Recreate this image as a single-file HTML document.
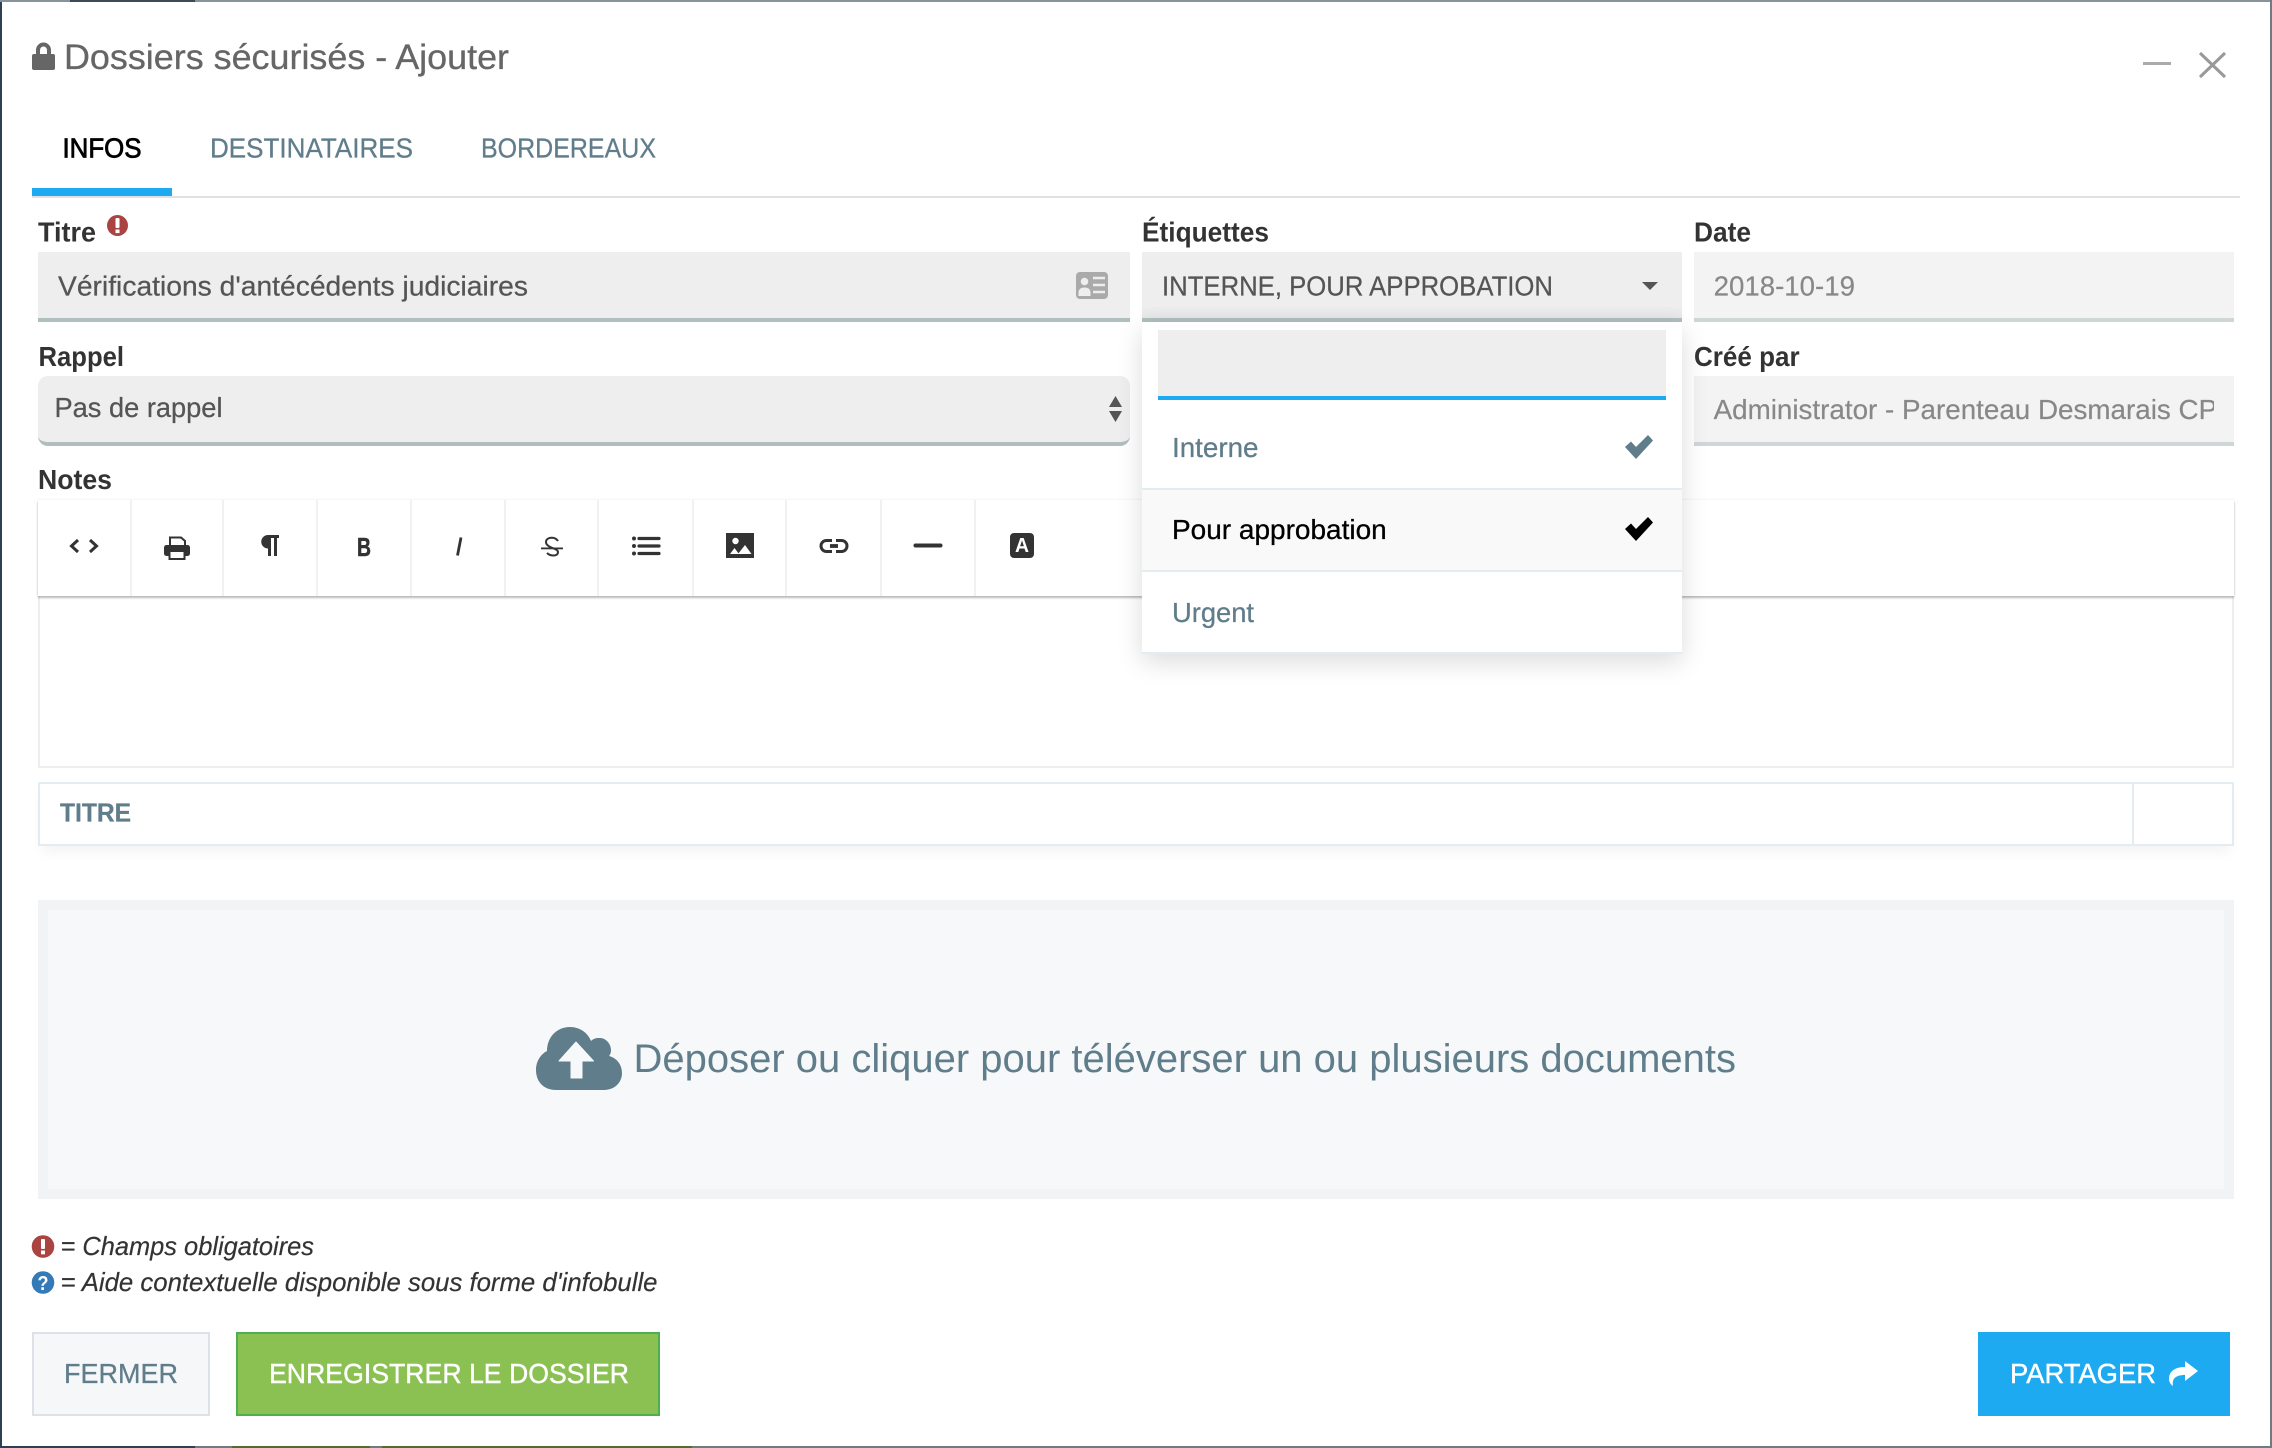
<!DOCTYPE html>
<html lang="fr">
<head>
<meta charset="utf-8">
<title>Dossiers sécurisés - Ajouter</title>
<style>
html,body{margin:0;padding:0;width:2272px;height:1448px;overflow:hidden;background:#2f4050;font-family:"Liberation Sans",sans-serif}
.b{position:absolute;box-sizing:border-box}
svg{position:absolute;left:0;top:0}
text{font-family:"Liberation Sans",sans-serif}
.m{font-weight:bold;fill:#333;font-size:28px}
.s{fill:#607d8b;stroke:#607d8b;stroke-width:.3px}
.w{fill:#fff;stroke:#fff;stroke-width:.4px}
.g{fill:#555;stroke:#555;stroke-width:.25px}
.l{fill:#888;stroke:#888;stroke-width:.2px}
.it{fill:#333;stroke:#333;stroke-width:.2px;font-style:italic}
.sep{top:500px;width:2px;height:96px;background:#f1f1f1}
</style>
</head>
<body>
<!-- backdrop strips -->
<div class="b" style="left:0;top:0;width:2272px;height:2px;background:#87939a"></div>
<div class="b" style="left:70px;top:0;width:125px;height:2px;background:#3b4a56"></div>
<div class="b" style="left:2270px;top:0;width:2px;height:1448px;background:#6f7b7e"></div>
<div class="b" style="left:0;top:1446px;width:2272px;height:2px;background:#6f7b7e"></div>
<div class="b" style="left:0;top:1446px;width:195px;height:2px;background:#2f4050"></div>
<div class="b" style="left:232px;top:1446px;width:138px;height:2px;background:#56692f"></div>
<div class="b" style="left:382px;top:1446px;width:310px;height:2px;background:#56692f"></div>

<!-- window -->
<div class="b" style="left:2px;top:2px;width:2268px;height:1444px;background:#fff"></div>

<!-- tabs -->
<div class="b" style="left:32px;top:196px;width:2208px;height:2px;background:#e0e0e0"></div>
<div class="b" style="left:32px;top:188px;width:140px;height:8px;background:#1eaaf1"></div>

<!-- row 1 -->
<div class="b" style="left:38px;top:252px;width:1092px;height:70px;background:#eee;border-bottom:4px solid #b0bec0"></div>
<div class="b" style="left:1142px;top:252px;width:540px;height:70px;background:linear-gradient(#eee 0,#eee 82%,#e6e6e6 100%);border-bottom:4px solid #b0bec0"></div>
<div class="b" style="left:1694px;top:252px;width:540px;height:70px;background:#f3f3f3;border-bottom:4px solid #cfd6d8"></div>

<!-- row 2 -->
<div class="b" style="left:38px;top:376px;width:1092px;height:70px;background:#eee;border-bottom:4px solid #b0bec0;border-radius:10px"></div>
<div class="b" style="left:1694px;top:376px;width:540px;height:70px;background:#f3f3f3;border-bottom:4px solid #cfd6d8"></div>

<!-- editor -->
<div class="b" style="left:38px;top:596px;width:2196px;height:172px;background:#fff;border:2px solid #eee;border-top:0"></div>
<div class="b" style="left:38px;top:500px;width:2196px;height:96px;background:#fff;box-shadow:0 2px 2px rgba(0,0,0,.25),0 0 3px rgba(0,0,0,.08)"></div>
<div class="b sep" style="left:130px"></div>
<div class="b sep" style="left:222px"></div>
<div class="b sep" style="left:316px"></div>
<div class="b sep" style="left:410px"></div>
<div class="b sep" style="left:504px"></div>
<div class="b sep" style="left:597px"></div>
<div class="b sep" style="left:692px"></div>
<div class="b sep" style="left:785px"></div>
<div class="b sep" style="left:880px"></div>
<div class="b sep" style="left:974px"></div>

<!-- title table -->
<div class="b" style="left:38px;top:782px;width:2196px;height:64px;background:#fff;border:2px solid #e3ecf0;box-shadow:0 10px 12px -4px rgba(0,0,0,.05)"></div>
<div class="b" style="left:2132px;top:782px;width:2px;height:64px;background:#e3ecf0"></div>

<!-- dropzone -->
<div class="b" style="left:38px;top:900px;width:2196px;height:299px;background:#f7f8fa;border:10px solid #f1f3f5"></div>

<!-- dropdown panel -->
<div class="b" style="left:1142px;top:322px;width:540px;height:332px;background:#fff;border-bottom:2px solid #e3ecf0;box-shadow:0 8px 24px rgba(0,0,0,.14)"></div>
<div class="b" style="left:1158px;top:330px;width:508px;height:70px;background:#eee;border-bottom:4px solid #1eaaf1"></div>
<div class="b" style="left:1142px;top:488px;width:540px;height:84px;background:#f9f9f9;border-top:2px solid #e3ecf0;border-bottom:2px solid #e3ecf0"></div>

<!-- buttons -->
<div class="b" style="left:32px;top:1332px;width:178px;height:84px;background:#f6f7f9;border:2px solid #dce2e7"></div>
<div class="b" style="left:236px;top:1332px;width:424px;height:84px;background:#8bc152;border:2px solid #4caf50"></div>
<div class="b" style="left:1978px;top:1332px;width:252px;height:84px;background:#1eaaf1"></div>

<svg width="2272" height="1448" viewBox="0 0 2272 1448" xmlns="http://www.w3.org/2000/svg">
<defs><clipPath id="c"><rect x="1694" y="376" width="520" height="66"/></clipPath></defs>

<!-- header -->
<rect x="32" y="54" width="23" height="16" rx="2" fill="#666"/>
<path d="M38 55v-5a5.500 5.500 0 0 1 11 0v5" fill="none" stroke="#666" stroke-width="4"/>
<text x="64" y="69" font-size="35" fill="#666" stroke="#666" stroke-width=".3" textLength="445" lengthAdjust="spacingAndGlyphs">Dossiers sécurisés - Ajouter</text>
<rect x="2143" y="62" width="28" height="3" fill="#aaa"/>
<path d="M2200 53L2225 77M2225 53L2200 77" stroke="#999" stroke-width="3" fill="none"/>

<!-- tabs -->
<text x="62.500" y="157.500" font-size="28" fill="#000" stroke="#000" stroke-width=".8" textLength="79" lengthAdjust="spacingAndGlyphs">INFOS</text>
<text x="210" y="157.500" font-size="28" class="s" textLength="203" lengthAdjust="spacingAndGlyphs">DESTINATAIRES</text>
<text x="481" y="157.500" font-size="28" class="s" textLength="175" lengthAdjust="spacingAndGlyphs">BORDEREAUX</text>

<!-- labels -->
<text x="38" y="241.700" class="m" textLength="58" lengthAdjust="spacingAndGlyphs">Titre</text>
<circle cx="117.500" cy="225.500" r="10.500" fill="#a94442"/>
<rect x="115.500" y="218" width="4" height="10" rx="1" fill="#fff"/><rect x="115.500" y="229.500" width="4" height="3.600" fill="#fff"/>
<text x="1142" y="241.700" class="m" textLength="127" lengthAdjust="spacingAndGlyphs">Étiquettes</text>
<text x="1694" y="241.700" class="m" textLength="57" lengthAdjust="spacingAndGlyphs">Date</text>
<text x="38.500" y="366" class="m" textLength="85.500" lengthAdjust="spacingAndGlyphs">Rappel</text>
<text x="1694" y="366" class="m" textLength="105.600" lengthAdjust="spacingAndGlyphs">Créé par</text>
<text x="38" y="489" class="m" textLength="74" lengthAdjust="spacingAndGlyphs">Notes</text>

<!-- field values -->
<text x="58" y="295.500" font-size="28" class="g" textLength="470" lengthAdjust="spacingAndGlyphs">Vérifications d'antécédents judiciaires</text>
<rect x="1076" y="272" width="32" height="27" rx="4" fill="#aaa"/>
<circle cx="1084.500" cy="281.500" r="3.800" fill="#eee"/>
<path d="M1078.500 296v-3.500c0-3 2-5 6-5s6 2 6 5v3.500z" fill="#eee"/>
<path d="M1093 278h12M1093 285h12M1093 292h12" stroke="#eee" stroke-width="2.500"/>
<text x="1162" y="295.500" font-size="28" class="g" textLength="391" lengthAdjust="spacingAndGlyphs">INTERNE, POUR APPROBATION</text>
<path d="M1642 282h16l-8 8z" fill="#555"/>
<text x="1713.600" y="295.500" font-size="28" class="l" textLength="141.400" lengthAdjust="spacingAndGlyphs">2018-10-19</text>
<text x="54.500" y="417" font-size="28" class="g" textLength="168" lengthAdjust="spacingAndGlyphs">Pas de rappel</text>
<path d="M1115.500 396l6.500 11h-13zM1115.500 422l6.500-11h-13z" fill="#555"/>
<g clip-path="url(#c)"><text x="1713.600" y="419" font-size="28" class="l" textLength="520" lengthAdjust="spacingAndGlyphs">Administrator - Parenteau Desmarais CPA</text></g>

<!-- toolbar icons -->
<g fill="#333">
<path d="M78 540l-6.500 6 6.500 6M90 540l6.500 6-6.500 6" fill="none" stroke="#333" stroke-width="3"/>
<path d="M170 546v-8.500h11l4 3.500v5" fill="none" stroke="#333" stroke-width="2"/>
<rect x="164" y="545" width="26" height="11" rx="2.500"/>
<rect x="169.500" y="551" width="15" height="8" fill="#fff" stroke="#333" stroke-width="2"/>
<path d="M279 535v3h-2v18h-3v-18h-3v18h-3v-7.500a6.750 6.750 0 0 1 0-13.500z"/>
<text x="357" y="556" font-size="26" font-weight="bold" stroke="#333" stroke-width=".5" textLength="14" lengthAdjust="spacingAndGlyphs">B</text>
<path d="M461 537.500l-3.500 18" fill="none" stroke="#333" stroke-width="2.800"/>
<path d="M558 541c-3-5-12-4-12 1 0 6 12 6 12 10 0 5-8 4-11 1" fill="none" stroke="#333" stroke-width="2"/>
<rect x="541" y="547.500" width="22" height="1.800"/>
<circle cx="634" cy="538.500" r="2"/><circle cx="634" cy="546" r="2"/><circle cx="634" cy="553.500" r="2"/>
<path d="M639 538.500h20M639 546h20M639 553.500h20" stroke="#333" stroke-width="3.200" stroke-linecap="round"/>
<rect x="726" y="533" width="28" height="25"/>
<circle cx="735.500" cy="541" r="3.200" fill="#fff"/>
<path d="M730 554l4.500-6 4.500 6zM738 554l7-9 6.500 9z" fill="#fff"/>
<path d="M832 540.500h-5.500a5.500 5.500 0 0 0 0 11h5.500M836 540.500h5.500a5.500 5.500 0 0 1 0 11h-5.500" fill="none" stroke="#333" stroke-width="3"/>
<path d="M830 546h8" stroke="#333" stroke-width="3.800"/>
<path d="M915.500 545.500h25" stroke="#333" stroke-width="4" stroke-linecap="round"/>
<rect x="1010" y="533" width="24" height="25" rx="4"/>
<text x="1015" y="552" font-size="20" font-weight="bold" fill="#fff" textLength="14" lengthAdjust="spacingAndGlyphs">A</text>
</g>

<!-- dropdown content -->
<text x="1172" y="457" font-size="28" class="s" textLength="86.500" lengthAdjust="spacingAndGlyphs">Interne</text>
<path d="M1625 447l6-5.500 5 5.500 12-12 5 5.500-17 18.500z" fill="#607d8b"/>
<text x="1172" y="539" font-size="28" fill="#000" stroke="#000" stroke-width=".3" textLength="214.700" lengthAdjust="spacingAndGlyphs">Pour approbation</text>
<path d="M1625 529l6-5.500 5 5.500 12-12 5 5.500-17 18.500z" fill="#000"/>
<text x="1172" y="622" font-size="28" class="s" textLength="82" lengthAdjust="spacingAndGlyphs">Urgent</text>

<!-- title table -->
<text x="60" y="821.700" font-size="26" font-weight="bold" class="s" textLength="71" lengthAdjust="spacingAndGlyphs">TITRE</text>

<!-- dropzone -->
<path d="M556 1090C544 1090 536 1082 536 1070C536 1061 541 1054 547 1051C547 1037 557 1027 570 1027C580 1027 588 1033 591 1041C594 1038 597 1038 600 1038C606 1038 611 1044 611 1050C611 1053 610 1055 609 1056C617 1058 622 1065 622 1073C622 1083 614 1090 604 1090Z" fill="#607d8b"/>
<path d="M576 1042L593.500 1061H582V1078H571V1061H559Z" fill="#f7f8fa" stroke="#f7f8fa" stroke-linejoin="round"/>
<text x="633.500" y="1072" font-size="40" fill="#607d8b" textLength="1102.500" lengthAdjust="spacingAndGlyphs">Déposer ou cliquer pour téléverser un ou plusieurs documents</text>

<!-- legend -->
<circle cx="43" cy="1246.500" r="11.300" fill="#a94442"/>
<rect x="41" y="1239" width="4" height="10" rx="1" fill="#fff"/><rect x="41" y="1250.500" width="4" height="3.800" fill="#fff"/>
<text x="60.500" y="1255" font-size="26" class="it" textLength="253.500" lengthAdjust="spacingAndGlyphs">= Champs obligatoires</text>
<circle cx="43" cy="1282.500" r="11.300" fill="#337ab7"/>
<text x="37.500" y="1290" font-size="20" font-weight="bold" fill="#fff" textLength="11" lengthAdjust="spacingAndGlyphs">?</text>
<text x="60.500" y="1291" font-size="26" class="it" textLength="597" lengthAdjust="spacingAndGlyphs">= Aide contextuelle disponible sous forme d'infobulle</text>

<!-- buttons -->
<text x="64" y="1383" font-size="28" class="s" textLength="114" lengthAdjust="spacingAndGlyphs">FERMER</text>
<text x="269" y="1383" font-size="28" class="w" textLength="360" lengthAdjust="spacingAndGlyphs">ENREGISTRER LE DOSSIER</text>
<text x="2010" y="1383" font-size="28" class="w" textLength="146" lengthAdjust="spacingAndGlyphs">PARTAGER</text>
<path d="M2198 1371L2185 1361V1367C2174 1367 2169 1372 2169 1379C2169 1382 2171 1385 2173 1386C2172 1380 2174 1375 2185 1375V1381Z" fill="#fff"/>
</svg>
</body>
</html>
